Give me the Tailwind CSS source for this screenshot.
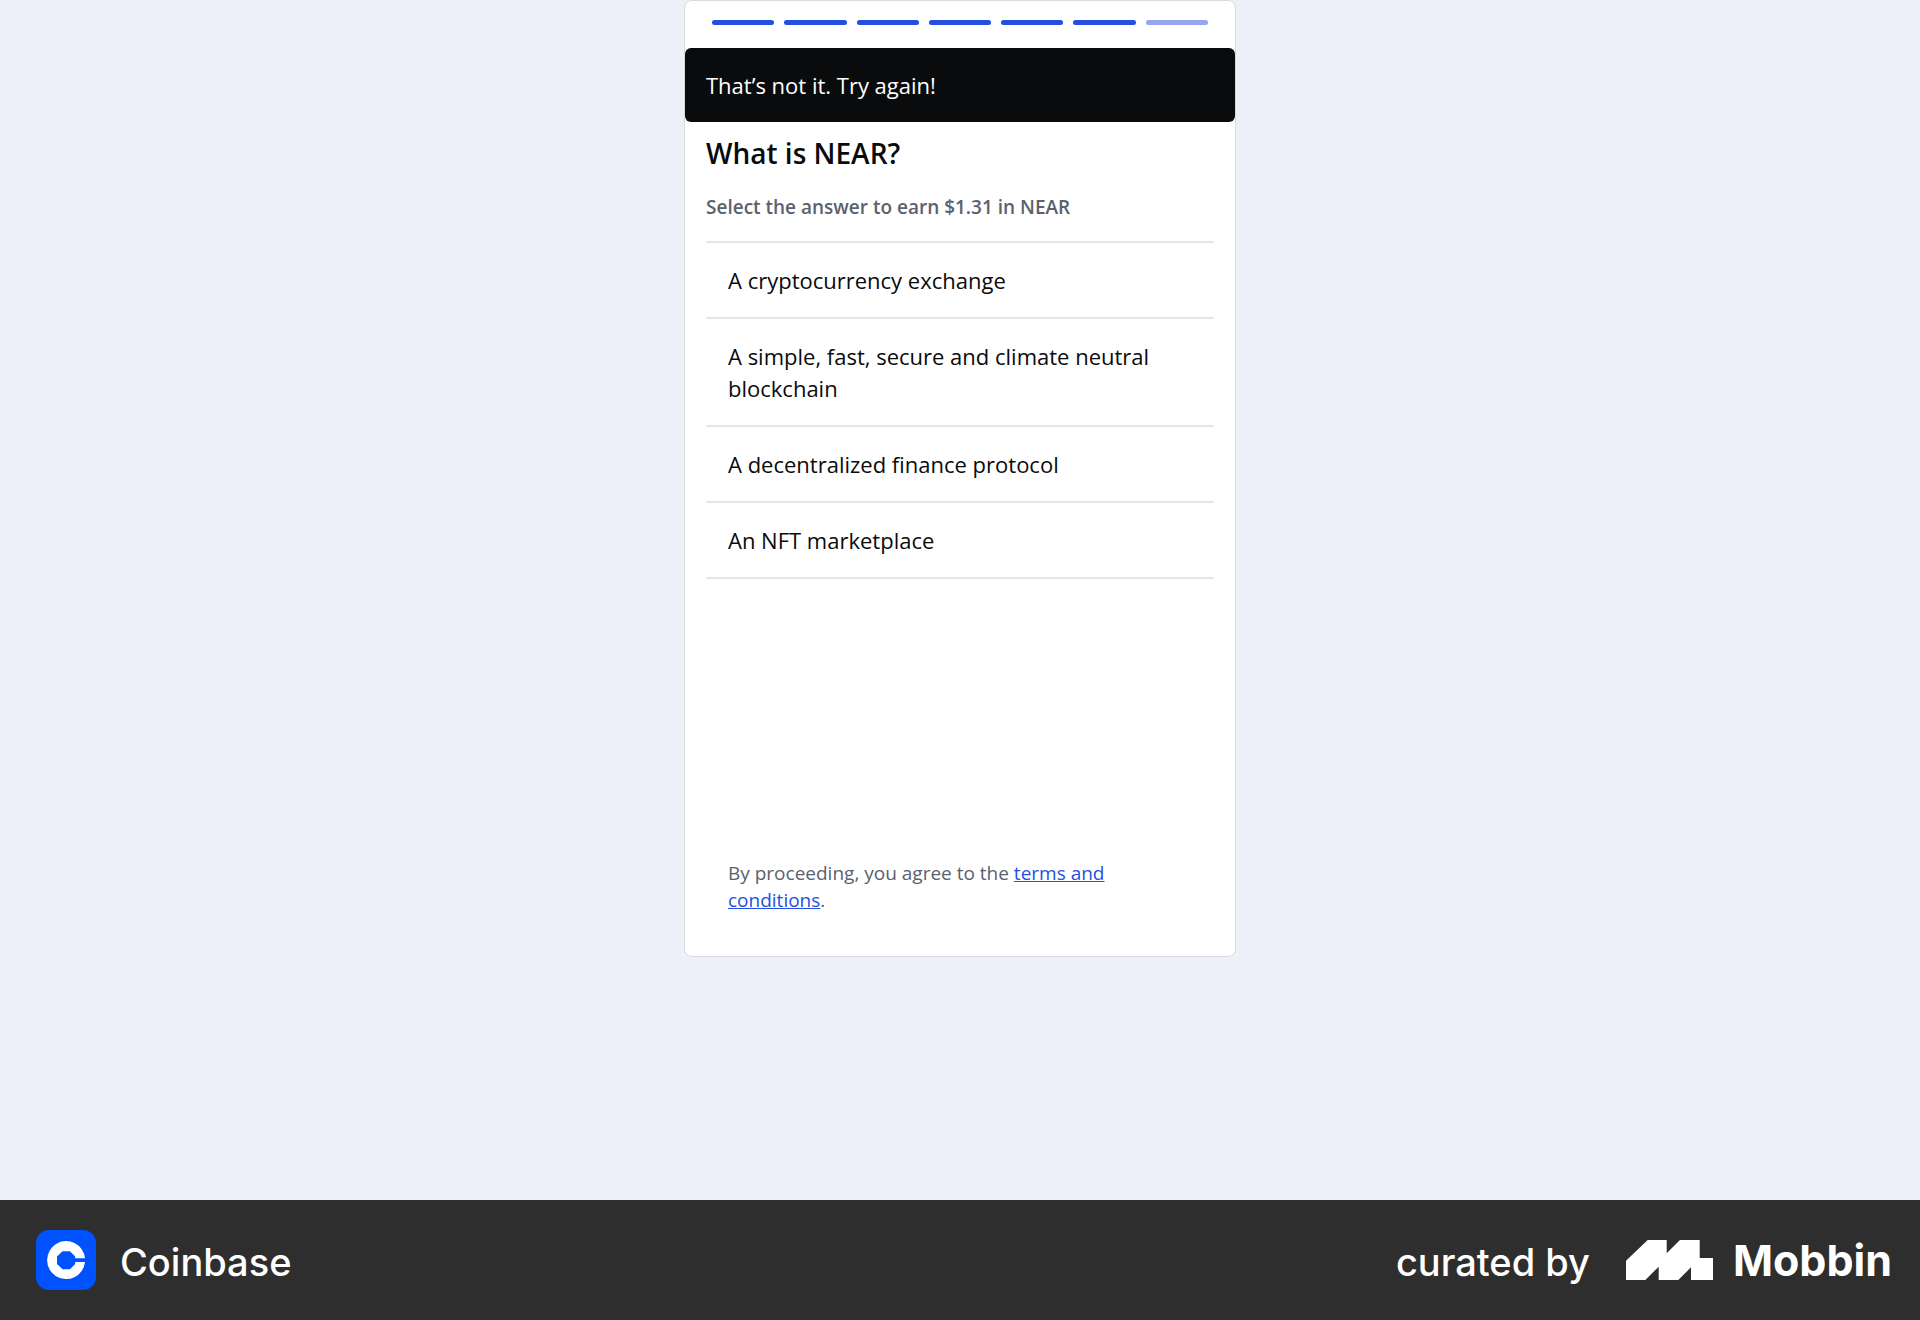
<!DOCTYPE html>
<html lang="en">
<head>
<meta charset="utf-8">
<meta name="viewport" content="width=device-width, initial-scale=1">
<title>What is NEAR?</title>
<script src="https://cdn.jsdelivr.net/npm/@tailwindcss/browser@4"></script>
</head>
<body class="flex min-h-screen flex-col bg-[#edf0f9] font-['Open_Sans',sans-serif] text-[#0a0b0d]">
  <main class="flex flex-1 flex-col items-center">
    <section class="flex min-h-[957px] w-full max-w-[552px] flex-col rounded-lg border border-[#d8dade] bg-white">
      <div class="flex gap-[10px] px-[27px] pt-[19px] pb-[23px]" role="progressbar" aria-label="Lesson progress" aria-valuemin="0" aria-valuemax="7" aria-valuenow="6">
        <span class="h-[5px] flex-1 rounded-full bg-[#254fe0]"></span>
        <span class="h-[5px] flex-1 rounded-full bg-[#254fe0]"></span>
        <span class="h-[5px] flex-1 rounded-full bg-[#254fe0]"></span>
        <span class="h-[5px] flex-1 rounded-full bg-[#254fe0]"></span>
        <span class="h-[5px] flex-1 rounded-full bg-[#254fe0]"></span>
        <span class="h-[5px] flex-1 rounded-full bg-[#254fe0]"></span>
        <span class="h-[5px] flex-1 rounded-full bg-[#93a6ef]"></span>
      </div>
      <p role="alert" class="rounded-md bg-[#0a0b0d] px-[21px] py-[21px] text-[22px] leading-8 text-white">That’s not it. Try again!</p>
      <div class="flex flex-1 flex-col px-[21px] pt-[11px]">
        <h1 class="text-[28px] font-semibold leading-10">What is NEAR?</h1>
        <p class="mt-5 mb-5 text-[19px] font-semibold leading-7 text-[#5b616e]">Select the answer to earn $1.31 in NEAR</p>
        <ul class="divide-y-2 divide-[#e7e7e8] border-y-2 border-[#e7e7e8] text-[22px] leading-8">
          <li><button type="button" class="w-full px-[22px] py-[21px] text-left">A cryptocurrency exchange</button></li>
          <li><button type="button" class="w-full px-[22px] py-[21px] text-left">A simple, fast, secure and climate neutral blockchain</button></li>
          <li><button type="button" class="w-full px-[22px] py-[21px] text-left">A decentralized finance protocol</button></li>
          <li><button type="button" class="w-full px-[22px] py-[21px] text-left">An NFT marketplace</button></li>
        </ul>
        <p class="mt-auto px-[22px] pb-[42px] text-[19px] leading-[27px] text-[#5b616e]">By proceeding, you agree to the <a href="#" class="text-[#254fe0] underline">terms and conditions</a>.</p>
      </div>
    </section>
  </main>
  <footer class="flex min-h-[120px] flex-wrap items-center justify-between gap-6 bg-[#2e2e2e] pr-7 pl-9 font-['Inter',sans-serif] text-white">
    <div class="flex items-center gap-6">
      <svg class="size-[60px]" viewBox="0 0 60 60" role="img" aria-label="Coinbase logo">
        <rect width="60" height="60" rx="13" fill="#0052ff"/>
        <path fill="#fff" d="M49 28.2H39.2V26.5L34 21.2H26.5L21 26.5V34L26.5 39.2H34L39.2 34V32H49A19 19 0 1 1 49 28.2Z"/>
      </svg>
      <span class="pt-1 text-[38px] font-medium leading-[56px]">Coinbase</span>
    </div>
    <div class="flex items-center">
      <span class="pt-1 text-[38px] font-medium leading-[56px]">curated by</span>
      <svg class="ml-9 h-10 w-[87px]" viewBox="0 0 87 40" role="img" aria-label="Mobbin logo">
        <path fill="#fff" d="M0 20.7 21.7 0H40.7V13.3L54 0H73.7V18H87V40H65V27.3L52.3 40H32.7V26.7L19.3 40H0Z"/>
      </svg>
      <span class="ml-5 text-[43px] font-bold leading-[60px]">Mobbin</span>
    </div>
  </footer>
</body>
</html>
